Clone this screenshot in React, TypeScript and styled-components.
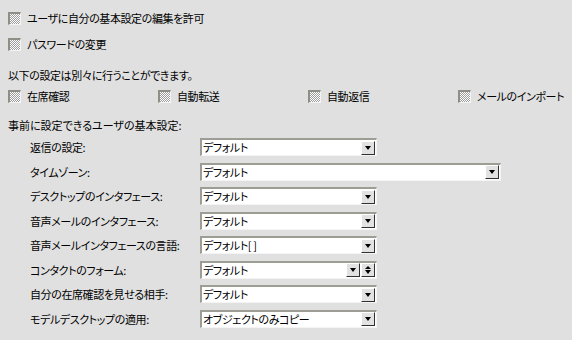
import { Fragment } from "react";
import styled, { createGlobalStyle } from "styled-components";

const GlobalStyle = createGlobalStyle`
  html, body {
    margin: 0;
    padding: 0;
    background: #e0e0e0;
  }
  body {
    font-family: "Noto Sans CJK JP", "DejaVu Sans", sans-serif;
    font-size: 11px;
    letter-spacing: -0.4px;
    color: #000;
    font-feature-settings: "palt";
  }
`;

const Page = styled.div`
  width: 572px;
  height: 340px;
  box-sizing: border-box;
  padding: 5px 8px 0 8px;
  overflow: hidden;
`;

const CheckLine = styled.label`
  display: flex;
  align-items: center;
  gap: 6px;
  height: 26px;
  white-space: nowrap;
`;

const Box = styled.span`
  width: 10px;
  height: 10px;
  flex: none;
  border-top: 2px solid #8e8e86;
  border-left: 2px solid #8e8e86;
  border-right: 1px solid #f4f4f4;
  border-bottom: 1px solid #f4f4f4;
  background-color: #ffffff;
  background-image: conic-gradient(#9c9c9c 0 25%, #ffffff 0 50%, #9c9c9c 0 75%, #ffffff 0);
  background-size: 2px 2px;
`;

const Note = styled.div`
  margin-top: 9px;
  height: 18px;
  line-height: 18px;
`;

const OptionGrid = styled.div`
  margin-top: 3px;
  display: grid;
  grid-template-columns: repeat(4, 150px);
`;

const Option = styled(CheckLine)`
  height: 18px;
`;

const Heading = styled.div`
  margin-top: 11px;
  height: 18px;
  line-height: 18px;
  letter-spacing: 0;
`;

const Form = styled.div`
  margin-top: 1px;
  padding-left: 22px;
  display: grid;
  grid-template-columns: 170px auto;
  grid-auto-rows: 24.5px;
  align-items: center;
`;

const Label = styled.span`
  line-height: 18px;
  white-space: nowrap;
`;

const Select = styled.div<{ $width: number }>`
  width: ${(p) => p.$width}px;
  height: 18px;
  box-sizing: border-box;
  display: flex;
  align-items: center;
  background: #ffffff;
  border-top: 2px solid #9d9d95;
  border-left: 2px solid #9d9d95;
  border-right: 1px solid #f4f4f4;
  border-bottom: 1px solid #f4f4f4;
  padding-right: 1px;
`;

const Value = styled.span`
  flex: 1;
  padding-left: 1px;
  white-space: nowrap;
  line-height: 15px;
`;

const ArrowButton = styled.span`
  width: 14px;
  height: 14px;
  flex: none;
  box-sizing: border-box;
  display: flex;
  flex-direction: column;
  align-items: center;
  justify-content: center;
  gap: 1px;
  background: #e2e2e2;
  border-top: 1px solid #ffffff;
  border-left: 1px solid #ffffff;
  border-right: 1px solid #303030;
  border-bottom: 1px solid #303030;
  & + & {
    margin-left: 1px;
  }
`;

const Tri = styled.span<{ $up?: boolean }>`
  width: 0;
  height: 0;
  border-left: 3.5px solid transparent;
  border-right: 3.5px solid transparent;
  ${(p) => (p.$up ? "border-bottom: 3px solid #000;" : "border-top: 4px solid #000;")}
`;

type Row = { label: string; value: string; width: number; spin?: boolean };

const rows: Row[] = [
  { label: "返信の設定:", value: "デフォルト", width: 177 },
  { label: "タイムゾーン:", value: "デフォルト", width: 301 },
  { label: "デスクトップのインタフェース:", value: "デフォルト", width: 177 },
  { label: "音声メールのインタフェース:", value: "デフォルト", width: 177 },
  { label: "音声メールインタフェースの言語:", value: "デフォルト[ ]", width: 177 },
  { label: "コンタクトのフォーム:", value: "デフォルト", width: 177, spin: true },
  { label: "自分の在席確認を見せる相手:", value: "デフォルト", width: 177 },
  { label: "モデルデスクトップの適用:", value: "オブジェクトのみコピー", width: 177 },
];

const options = ["在席確認", "自動転送", "自動返信", "メールのインポート"];

export default function App() {
  return (
    <Page>
      <GlobalStyle />
      <CheckLine>
        <Box />
        <span>ユーザに自分の基本設定の編集を許可</span>
      </CheckLine>
      <CheckLine>
        <Box />
        <span>パスワードの変更</span>
      </CheckLine>
      <Note>以下の設定は別々に行うことができます。</Note>
      <OptionGrid>
        {options.map((o) => (
          <Option key={o}>
            <Box />
            <span>{o}</span>
          </Option>
        ))}
      </OptionGrid>
      <Heading>事前に設定できるユーザの基本設定:</Heading>
      <Form>
        {rows.map((r) => (
          <Fragment key={r.label}>
            <Label>{r.label}</Label>
            <Select $width={r.width}>
              <Value>{r.value}</Value>
              <ArrowButton>
                <Tri />
              </ArrowButton>
              {r.spin && (
                <ArrowButton>
                  <Tri $up />
                  <Tri />
                </ArrowButton>
              )}
            </Select>
          </Fragment>
        ))}
      </Form>
    </Page>
  );
}
